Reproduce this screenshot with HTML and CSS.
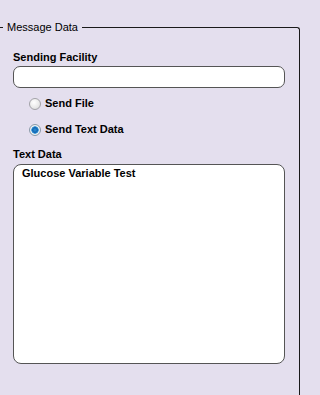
FILE: index.html
```html
<!DOCTYPE html>
<html>
<head>
<meta charset="utf-8">
<link rel="stylesheet" href="styles.css">
</head>
<body>
<fieldset class="group">
  <legend class="group-title">Message Data</legend>
  <label class="field-label" for="facility">Sending Facility</label>
  <input class="text-input" id="facility" type="text">
  <div class="radio-list">
    <label class="radio-row"><input class="radio" type="radio" name="mode"><span>Send File</span></label>
    <label class="radio-row"><input class="radio" type="radio" name="mode" checked><span>Send Text Data</span></label>
  </div>
  <label class="field-label field-label-tight" for="textdata">Text Data</label>
  <textarea class="text-area" id="textdata">Glucose Variable Test</textarea>
</fieldset>
</body>
</html>
```
FILE: styles.css
```css
html, body {
  margin: 0;
  padding: 0;
  background: #e4dfee;
  overflow: hidden;
}
body {
  font-family: "Liberation Sans", Arial, sans-serif;
  font-size: 11px;
  color: #000;
  padding-top: 20px;
  width: 320px;
  height: 395px;
  box-sizing: border-box;
}
.group {
  margin: 0 0 0 -6px;
  width: 305px;
  height: 375px;
  box-sizing: border-box;
  border: 1px solid #1a1a1a;
  border-bottom: none;
  border-radius: 0 3px 0 0;
  padding: 0 14px 0 18px;
  display: flex;
  flex-direction: column;
  align-items: flex-start;
}
.group-title {
  margin-left: -10px;
  padding: 0 4px;
  line-height: 14px;
  font-weight: normal;
  color: #000;
}
.field-label {
  font-weight: bold;
  line-height: 14px;
  margin-top: 16px;
}
.field-label-tight {
  margin-top: 11px;
}
.text-input {
  margin: 2px 0 0 0;
  width: 272px;
  height: 22px;
  box-sizing: border-box;
  border: 1px solid #555;
  border-radius: 7px;
  background: #fff;
  outline: none;
}
.radio-list {
  display: flex;
  flex-direction: column;
  gap: 13px;
  margin: 9px 0 0 16px;
}
.radio-row {
  display: flex;
  align-items: center;
  gap: 4px;
  font-weight: bold;
  line-height: 13px;
}
.radio {
  appearance: none;
  -webkit-appearance: none;
  margin: 0;
  width: 12px;
  height: 12px;
  border-radius: 50%;
  border: 1px solid #a3a3a8;
  background: radial-gradient(circle at 40% 35%, #ffffff 0%, #e8e8e8 60%, #cfcfd2 100%);
  box-sizing: border-box;
}
.radio:checked {
  border-color: #8a9aa8;
  background: radial-gradient(circle at 50% 50%, #2a8fd8 0, #1366b0 2.5px, #4aa3e0 3.5px, #f4f4f4 4px, #dcdcdc 100%);
}
.text-area {
  margin: 3px 0 0 0;
  width: 272px;
  height: 200px;
  box-sizing: border-box;
  border: 1px solid #555;
  border-radius: 8px;
  background: #fff;
  padding: 1px 8px;
  font-family: "Liberation Sans", Arial, sans-serif;
  font-size: 11px;
  font-weight: bold;
  line-height: 14px;
  resize: none;
  outline: none;
}
```
